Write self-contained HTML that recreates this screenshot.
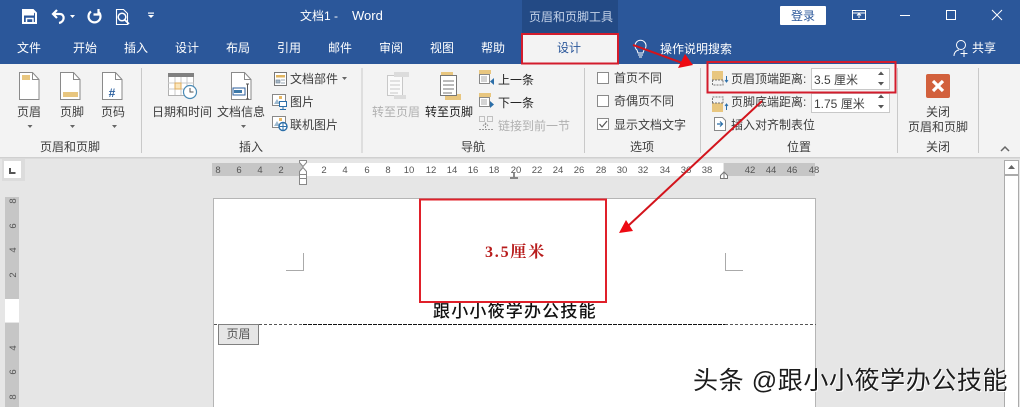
<!DOCTYPE html>
<html><head><meta charset="utf-8"><style>
html,body{margin:0;padding:0;width:1020px;height:407px;overflow:hidden;background:#e6e6e6}
svg{display:block}
text{font-family:"Liberation Sans","Noto Sans CJK SC",sans-serif;font-size:12px;fill:#3e3e3e}
.w{fill:#fff}.m{text-anchor:middle}.g{fill:#b0b0b0}.d{fill:#222}
.r text,text.r{font-size:9.5px;fill:#555;text-anchor:middle}
#wm{position:absolute;left:693px;top:363px;font:25px/36px "Liberation Sans","Noto Sans CJK SC",sans-serif;letter-spacing:.6px;color:#1c1c1c;text-shadow:1px 1px 0 #fff,-1px 0 0 rgba(255,255,255,.7);white-space:pre}
</style></head><body>
<svg width="1020" height="407" viewBox="0 0 1020 407" xmlns="http://www.w3.org/2000/svg">
<rect width="1020" height="407" fill="#e6e6e6"/>
<rect width="1020" height="64" fill="#2b579a"/>
<rect x="522" y="0" width="96" height="33" fill="#234a85"/>
<rect y="64" width="1020" height="93" fill="#f3f3f3"/>
<rect y="157" width="1020" height="1.5" fill="#d0d0d0"/>

<!-- QAT -->
<path d="M23 10h10l3 3v10H23z" fill="none" stroke="#fff" stroke-width="2"/>
<rect x="24" y="11" width="10" height="4.500" fill="#fff"/>
<path d="M26.500 23v-4.500h6.500v4.500" fill="none" stroke="#fff" stroke-width="1.500"/>
<g fill="none" stroke="#fff" stroke-width="2.200">
<path d="M57 10l-4 4 4 4M53 14h7c5 0 5 8-1 9"/>
<path d="M91 11.500a6 6 0 1 0 7 0M98.500 9v5.500h-5"/>
</g>
<g fill="none" stroke="#fff">
<path d="M116.500 9.500h7l4 4v11h-11z" stroke-width="1.100"/><circle cx="122" cy="17" r="3.800" stroke-width="1.500"/><path d="M125 20l4 4" stroke-width="1.800"/>
</g>
<path d="M70 15h5l-2.500 3z M148 15h6l-3 3z" fill="#fff"/><rect x="148" y="12.500" width="6" height="1.200" fill="#fff"/>

<!-- Title -->
<text x="300" y="20" class="w">文档1  -</text>
<text x="352" y="20" class="w" style="font-size:13px">Word</text>
<text x="529" y="21" style="fill:#c4d2e8">页眉和页脚工具</text>
<rect x="780" y="6" width="46" height="19" rx="1" fill="#fff"/>
<text x="803" y="20" class="m" style="fill:#2b579a">登录</text>
<g fill="none" stroke="#fff">
<rect x="852.500" y="10.500" width="13" height="9"/><path d="M852 13h14M859 18v-4M857 15.500l2-2 2 2"/>
<path d="M900 15.500h10"/><rect x="946.500" y="10.500" width="9" height="9"/><path d="M992 10l10 10M1002 10l-10 10"/>
</g>

<!-- Tabs -->
<text x="17" y="52" class="w">文件</text><text x="73" y="52" class="w">开始</text><text x="124" y="52" class="w">插入</text>
<text x="175" y="52" class="w">设计</text><text x="226" y="52" class="w">布局</text><text x="277" y="52" class="w">引用</text>
<text x="328" y="52" class="w">邮件</text><text x="379" y="52" class="w">审阅</text><text x="430" y="52" class="w">视图</text>
<text x="481" y="52" class="w">帮助</text><text x="660" y="53" class="w">操作说明搜索</text><text x="972" y="52" class="w">共享</text>
<rect x="522" y="34" width="96" height="29.500" fill="#f3f3f3" stroke="#d31c2c" stroke-width="2"/>
<text x="569" y="52" class="m" style="fill:#2b579a">设计</text>
<g fill="none" stroke="#fff">
<path d="M637 50a5.500 5.500 0 1 1 7 0l-1 3h-5z"/><path d="M638 55h5M639 57h3"/>
<circle cx="961" cy="45" r="4.500"/><path d="M954 56c0-4 3-6 5-6M964 50v7M960.500 53.500h7"/>
</g>

<!-- Group separators -->
<g fill="#c9c9c9"><rect x="141" y="68" width="1" height="85"/><rect x="361.500" y="68" width="1" height="85"/><rect x="584" y="68" width="1" height="85"/><rect x="700" y="68" width="1" height="85"/><rect x="897" y="68" width="1" height="85"/><rect x="978" y="68" width="1" height="85"/></g>

<!-- Header/footer group -->
<g fill="#fff" stroke="#8a8a8a">
<path d="M19.500 72.500h13l6.500 7v20H19.500z"/><path d="M60.500 72.500h13l6.500 7v20H60.500z"/><path d="M102.500 72.500h13l6.500 7v20h-19.500z"/>
<path d="M32.500 72.500v7H39M73.500 72.500v7H80M115.500 72.500v7h6.500" fill="none"/>
</g>
<rect x="22" y="75" width="8" height="5" fill="#e8c67f"/><rect x="63" y="92" width="15" height="5" fill="#e8c67f"/>
<text x="112" y="97" class="m" style="font-size:12px;font-weight:bold;fill:#2b5f9e">#</text>
<text x="29" y="116" class="m">页眉</text><text x="72" y="116" class="m">页脚</text><text x="113" y="116" class="m">页码</text>
<text x="70" y="151" class="m">页眉和页脚</text>
<path d="M27.500 125h5l-2.500 3zM70 125h5l-2.500 3zM112 125h5l-2.500 3zM241 125h5l-2.500 3zM342 77h5l-2.500 3z" fill="#666"/>

<!-- Insert group -->
<rect x="168.500" y="73.500" width="25" height="22" fill="#fff" stroke="#b0b0b0"/><rect x="168" y="73" width="26" height="4" fill="#808080"/>
<path d="M175 77v18M181 77v18M187 77v18M168 83h26M168 89h26" stroke="#c8c8c8" fill="none"/>
<rect x="175" y="83" width="6" height="6" fill="#fbe6bc" stroke="#e0ae5e"/>
<circle cx="190" cy="92" r="6.500" fill="#fff" stroke="#4a8ab5" stroke-width="1.200"/><path d="M190 88v4h3.500" stroke="#555" fill="none"/>
<path d="M231.500 72.500h13l6.500 7v20h-19.500z" fill="#fff" stroke="#8a8a8a"/><path d="M244.500 72.500v7h6.500" fill="none" stroke="#8a8a8a"/>
<rect x="233" y="88" width="12" height="7" fill="#fff" stroke="#2b5f9e"/><rect x="234" y="90" width="8" height="3" fill="#3c78a8"/>
<path d="M246 84h3M247.500 84v15M246 99h3" stroke="#555" fill="none"/>
<text x="182" y="116" class="m">日期和时间</text><text x="241" y="116" class="m">文档信息</text>
<text x="251" y="151" class="m">插入</text>
<rect x="274.500" y="72.500" width="12" height="13" fill="#fff" stroke="#777"/><rect x="276" y="75" width="9" height="2.500" fill="#e0b45f"/><path d="M276 80h4v3h-4zM281 80h4M281 83h4" fill="#a6b8c8" stroke="#7a8a9a" stroke-width=".7"/>
<rect x="272.500" y="94.500" width="13" height="11" fill="#fff" stroke="#888"/><path d="M274 104l3-5 3 5z" fill="#9db9cf"/><rect x="279" y="96" width="3" height="3" fill="#e8b866"/>
<rect x="279.500" y="101.500" width="7" height="5" fill="#fff" stroke="#2b6ea8"/><path d="M283 107v2M280 109.500h6" stroke="#2b6ea8"/>
<rect x="272.500" y="116.500" width="13" height="11" fill="#fff" stroke="#888"/><path d="M274 126l3-5 3 5z" fill="#9db9cf"/><rect x="279" y="118" width="3" height="3" fill="#e8b866"/>
<circle cx="283" cy="126.500" r="4" fill="#fff" stroke="#2b6ea8" stroke-width="1.400"/><path d="M279 126.500h8M283 122.500v8" stroke="#2b6ea8"/>
<text x="290" y="83" >文档部件</text><text x="290" y="106">图片</text><text x="290" y="129">联机图片</text>

<!-- Navigation -->
<g fill="none" stroke="#c8c8c8"><rect x="387.500" y="75.500" width="15" height="20" fill="#fafafa"/><path d="M390 81h10M390 85h10M390 89h10M390 93h8"/></g>
<rect x="394" y="72" width="15" height="5" fill="#dcdcdc"/><rect x="394" y="95" width="12" height="4" fill="#dcdcdc"/>
<rect x="441" y="72" width="12" height="5" fill="#e8c67f"/><rect x="445" y="94" width="16" height="6" fill="#e8c67f"/>
<g fill="none" stroke="#777"><rect x="440.500" y="75.500" width="16" height="20" fill="#fff"/><path d="M443 81h11M443 85h11M443 89h11M443 93h9"/></g>
<text x="396" y="116" class="m g">转至页眉</text><text x="449" y="116" class="m d">转至页脚</text><text x="473" y="151" class="m">导航</text>
<rect x="479" y="70" width="12" height="4" fill="#e8c67f"/><rect x="479.500" y="74.500" width="10" height="9" fill="#fff" stroke="#888"/><path d="M481 77h6M481 79h6M481 81h6" stroke="#aaa"/><path d="M494 78v7l-4-3.500z" fill="#2b6ea8"/>
<rect x="479" y="93" width="12" height="4" fill="#e8c67f"/><rect x="479.500" y="97.500" width="10" height="9" fill="#fff" stroke="#888"/><path d="M481 100h6M481 102h6M481 104h6" stroke="#aaa"/><path d="M490 101v7l4-3.500z" fill="#2b6ea8"/>
<path d="M479.500 116.500h5v5h-5zM487.500 116.500h5v5h-5z" fill="none" stroke="#c0c0c0"/><path d="M483 126l2.500-3 2.500 3M485.500 123v6M479 129.500h14" fill="none" stroke="#999" stroke-dasharray="2 1"/>
<text x="498" y="84" class="d">上一条</text><text x="498" y="107" class="d">下一条</text><text x="498" y="130" class="g">链接到前一节</text>

<!-- Options -->
<g fill="#fff" stroke="#8a8a8a"><rect x="597.500" y="72.500" width="11" height="11"/><rect x="597.500" y="95.500" width="11" height="11"/><rect x="597.500" y="118.500" width="11" height="11"/></g>
<path d="M599.500 124l2.500 3 5-6" fill="none" stroke="#555" stroke-width="1.200"/>
<text x="614" y="82">首页不同</text><text x="614" y="105">奇偶页不同</text><text x="614" y="129">显示文档文字</text>
<text x="642" y="151" class="m">选项</text>

<!-- Position -->
<rect x="712" y="71" width="11" height="9" fill="#e8c67f"/><path d="M712.500 80v5h10.500v-5M712 80h11" fill="none" stroke="#777" stroke-dasharray="2 1"/><path d="M726.500 76v6M725 80l1.500 2 1.500-2" fill="none" stroke="#2b6ea8"/>
<rect x="712" y="103" width="11" height="9" fill="#e8c67f"/><path d="M712.500 103v-6h10.500v6M712 103h11" fill="none" stroke="#777" stroke-dasharray="2 1"/><path d="M726.500 110v-6M725 106l1.500-2 1.500 2" fill="none" stroke="#2b6ea8"/>
<path d="M714.500 117.500h8l3 3v10h-11z" fill="#fff" stroke="#888"/><path d="M717 124h5M720 121.500l2.500 2.500-2.500 2.500" fill="none" stroke="#2b6ea8" stroke-width="1.200"/>
<text x="731" y="83">页眉顶端距离:</text><text x="731" y="106">页脚底端距离:</text><text x="731" y="129">插入对齐制表位</text>
<rect x="811.500" y="68.500" width="78" height="21" fill="#fff" stroke="#c8c8c8"/><rect x="811.500" y="93.500" width="78" height="19" fill="#fff" stroke="#c8c8c8"/>
<text x="814" y="84">3.5 厘米</text><text x="814" y="108">1.75 厘米</text>
<path d="M878 75h6l-3-3.500zM878 82h6l-3 3.500zM878 98h6l-3-3.500zM878 105h6l-3 3.500z" fill="#555"/>
<text x="799" y="151" class="m">位置</text>

<!-- Close -->
<rect x="926" y="74" width="24" height="24" rx="2" fill="#d2603c"/>
<path d="M933 81l10 10M943 81l-10 10" stroke="#fff" stroke-width="3.200" fill="none"/>
<text x="938" y="116" class="m">关闭</text><text x="938" y="131" class="m">页眉和页脚</text><text x="938" y="151" class="m">关闭</text>
<path d="M1001 151l4-4 4 4" fill="none" stroke="#666" stroke-width="1.500"/>

<!-- Horizontal ruler -->
<rect x="212" y="163" width="91" height="13" fill="#c6c6c6"/><rect x="303" y="163" width="420" height="13" fill="#fff"/><rect x="724" y="163" width="91" height="13" fill="#c6c6c6"/>
<g class="r">
<text x="218" y="173">8</text><text x="239" y="173">6</text><text x="260" y="173">4</text><text x="281" y="173">2</text>
<text x="324" y="173">2</text><text x="345" y="173">4</text><text x="367" y="173">6</text><text x="388" y="173">8</text>
<text x="409" y="173">10</text><text x="431" y="173">12</text><text x="452" y="173">14</text><text x="473" y="173">16</text><text x="494" y="173">18</text>
<text x="516" y="173">20</text><text x="537" y="173">22</text><text x="558" y="173">24</text><text x="579" y="173">26</text><text x="601" y="173">28</text>
<text x="622" y="173">30</text><text x="643" y="173">32</text><text x="665" y="173">34</text><text x="686" y="173">36</text><text x="707" y="173">38</text>
<text x="750" y="173">42</text><text x="771" y="173">44</text><text x="792" y="173">46</text><text x="814" y="173">48</text>
</g>
<path d="M299.500 160.500h7v2l-3.500 4-3.500-4z M303 167.500l3.500 4v3h-7v-3z" fill="#fff" stroke="#888"/><rect x="299.500" y="178.500" width="7" height="6" fill="#fff" stroke="#888"/><rect x="299.500" y="174.500" width="7" height="4" fill="#fff" stroke="#888"/>
<path d="M514 173v4M510 178h8" stroke="#666" stroke-width="1.500" fill="none"/>
<path d="M720.500 178.500v-3l3.500-3.500 3.500 3.500v3z" fill="#fff" stroke="#777"/><path d="M724 173v5" stroke="#777"/>

<!-- Tab selector -->
<rect x="2" y="159" width="23" height="22" fill="#dcdcdc"/><rect x="4" y="161" width="17" height="17" fill="#fff"/>
<path d="M10 168v5h5.500" fill="none" stroke="#555" stroke-width="2"/>

<!-- Vertical ruler -->
<rect x="5" y="197" width="14" height="102" fill="#c6c6c6"/><rect x="5" y="299" width="14" height="23" fill="#fff"/><rect x="5" y="323" width="14" height="84" fill="#c6c6c6"/>
<g class="r">
<text transform="translate(16 201) rotate(-90)">8</text><text transform="translate(16 226) rotate(-90)">6</text><text transform="translate(16 250) rotate(-90)">4</text><text transform="translate(16 275) rotate(-90)">2</text>
<text transform="translate(16 348) rotate(-90)">4</text><text transform="translate(16 372) rotate(-90)">6</text><text transform="translate(16 397) rotate(-90)">8</text>
</g>

<!-- Page -->
<rect x="213.500" y="198.500" width="602" height="220" fill="#fff" stroke="#b5b5b5"/>
<path d="M303.500 253v17.500H286M725.500 253v17.500H743" fill="none" stroke="#aaa"/>
<path d="M214 324.500h89M725 324.500h91" stroke="#555" stroke-dasharray="3 2"/>
<path d="M303 324.500h422" stroke="#111" stroke-dasharray="4 1"/>
<rect x="218.500" y="324.500" width="40" height="20" fill="#e6e6e6" stroke="#808080"/>
<text x="238.500" y="338" class="m" style="fill:#555">页眉</text>
<text x="433" y="317" style="font-size:17px;letter-spacing:1.200px;fill:#111;font-weight:500">跟小小筱学办公技能</text>
<rect x="420" y="199.500" width="186" height="102.500" fill="none" stroke="#e0202a" stroke-width="2"/>
<text x="485" y="257" style="font-size:16px;font-weight:bold;fill:#b81c1c;font-family:'Liberation Serif','Noto Serif CJK SC',serif;letter-spacing:1.800px">3.5厘米</text>

<!-- Scrollbar -->
<rect x="1004.500" y="160.500" width="14" height="247" fill="#fff" stroke="#ababab"/><rect x="1004" y="174" width="15" height="2" fill="#ababab"/>
<path d="M1008 169h7l-3.500-4z" fill="#666"/>

<!-- Arrows -->
<path d="M633 45l52 19" stroke="#d3141c" stroke-width="2" fill="none"/><path d="M685 54l8 11-15 3z" fill="#ee0a12"/>
<path d="M762 101L628 226" stroke="#d3141c" stroke-width="2" fill="none"/><path d="M619 233l7-13 7 11z" fill="#ee0a12"/>
<rect x="707.500" y="62" width="188" height="30.500" fill="none" stroke="#d31c2c" stroke-width="2"/>
</svg>
<div id="wm">头条 @跟小小筱学办公技能</div>
</body></html>
